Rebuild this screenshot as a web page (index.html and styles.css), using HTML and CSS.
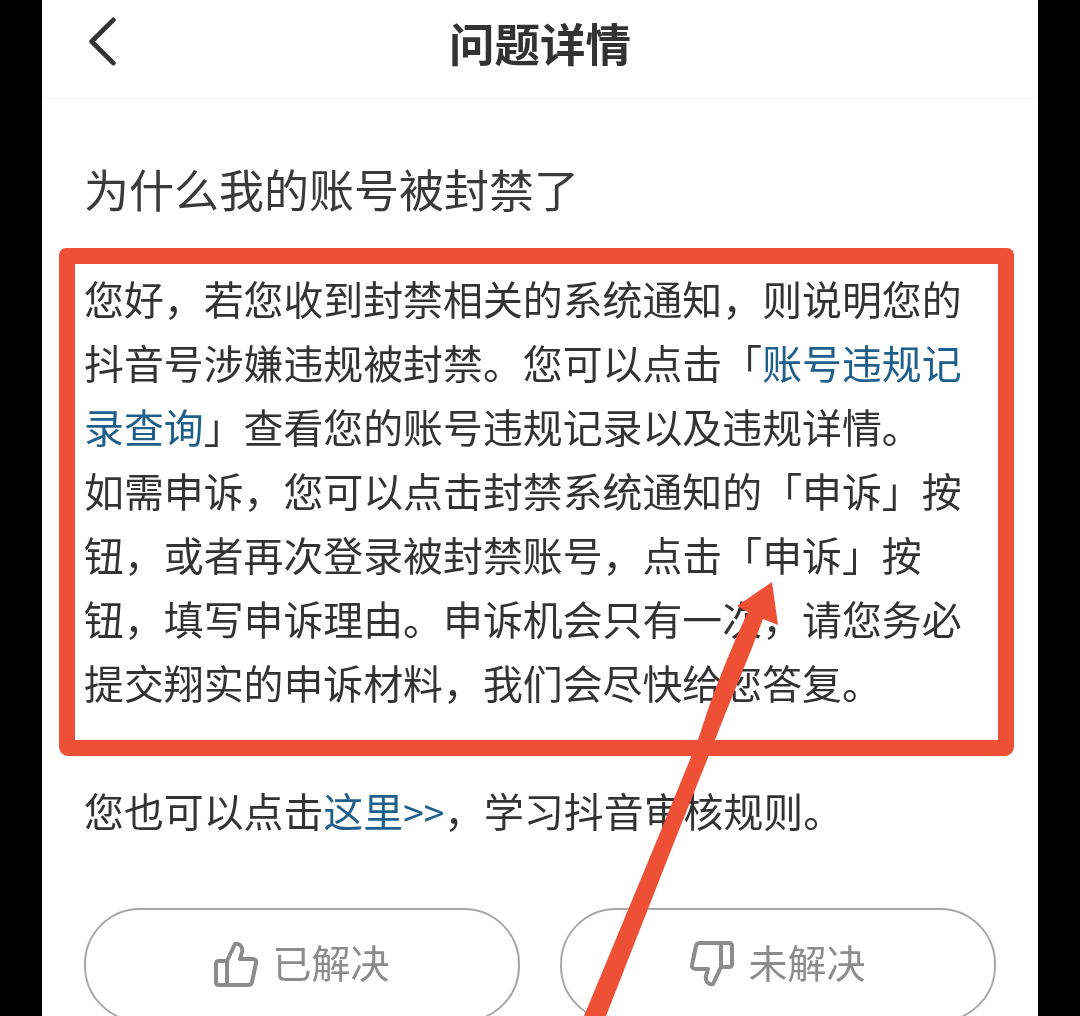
FILE: index.html
```html
<!DOCTYPE html>
<html lang="zh-CN">
<head>
<meta charset="utf-8">
<title>问题详情</title>
<link rel="stylesheet" href="styles.css">
</head>
<body>
<main class="phone">
  <header class="topbar">
    <svg class="back" viewBox="0 0 36 52" aria-hidden="true"><path d="M29 3 L6 26 L29 49"/></svg>
    <h1 class="topbar-title">问题详情</h1>
  </header>
  <section class="content">
    <h2 class="question">为什么我的账号被封禁了</h2>
    <p class="answer">您好，若您收到封禁相关的系统通知，则说明您的抖音号涉嫌违规被封禁。您可以点击「<a class="link">账号违规记录查询</a>」查看您的账号违规记录以及违规详情。<br>如需申诉，您可以点击封禁系统通知的「申诉」按钮，或者再次登录被封禁账号，点击「申诉」按钮，填写申诉理由。申诉机会只有一次，请您务必提交翔实的申诉材料，我们会尽快给您答复。</p>
    <p class="more">您也可以点击<a class="link">这里<span class="chevrons">&gt;&gt;</span></a>，学习抖音审核规则。</p>
    <div class="actions">
      <button class="vote">
        <svg class="vote-icon" viewBox="0 0 44 46" aria-hidden="true"><path d="M13 20 L21 3 C26 2 29 6 28 11 L26 18 L39 18 C41.500 18 42.500 20 42 22 L38 41 C37.500 43 36.500 44 34 44 L13 44 Z"/><path d="M13 20 L5 20 C3 20 2 21 2 23 L2 41 C2 43 3 44 5 44 L13 44"/></svg>
        <span class="vote-label">已解决</span>
      </button>
      <button class="vote">
        <svg class="vote-icon" viewBox="0 0 44 46" aria-hidden="true"><path d="M31 26 L23 43 C18 44 15 40 16 35 L18 28 L6 28 C3 28 1.500 26 2 24 L6 5 C6.500 3 7.500 2 10 2 L31 2 Z"/><path d="M31 2 L39 2 C41 2 42 3 42 5 L42 23 C42 25 41 26 39 26 L31 26"/></svg>
        <span class="vote-label">未解决</span>
      </button>
    </div>
  </section>
  <div class="highlight"></div>
  <svg class="arrow" viewBox="0 0 1080 1016" aria-hidden="true"><path d="M772 582 L778 625 L763 619 C748 660 730 700 715 740 L675 840 L606 1016 L584 1016 L657 840 L698 740 C712 695 730 650 748 612 L737 606 Z"/></svg>
</main>
</body>
</html>
```

FILE: styles.css
```css
* { box-sizing: border-box; }

html, body {
  margin: 0;
  height: 1016px;
  background: #000;
  overflow: hidden;
}

body {
  font-family: "Noto Sans CJK SC", "Noto Sans", sans-serif;
  color: #333;
}

.phone {
  position: relative;
  width: 996px;
  height: 1016px;
  margin: 0 auto;
  background: #fff;
  overflow: hidden;
}

.topbar {
  height: 99px;
  display: flex;
  align-items: center;
  justify-content: center;
  position: relative;
  border-bottom: 1px solid #f1f1f1;
}

.topbar-title {
  margin: -14px 0 0 0;
  font-size: 45.5px;
  font-weight: 700;
  line-height: 64px;
  color: #333;
  filter: blur(.4px);
}

.back {
  position: absolute;
  left: 44px;
  top: 17px;
  width: 34px;
  height: 49px;
  fill: none;
  stroke: #333;
  stroke-width: 5;
  stroke-linecap: round;
  stroke-linejoin: round;
}

.content {
  padding: 58px 0 0 42px;
  filter: blur(.4px);
}

.question {
  margin: 0 0 45px;
  font-size: 45px;
  font-weight: 400;
  line-height: 64px;
  color: #3a3a3a;
}

.answer {
  margin: 0 0 64px;
  width: 880px;
  font-size: 39.9px;
  line-height: 64px;
  color: #333;
}

.more {
  margin: 0 0 65px;
  font-size: 39.9px;
  line-height: 64px;
  color: #333;
}

.link {
  color: #1f5f8b;
}

.chevrons {
  font-size: 37px;
}

.actions {
  display: flex;
  gap: 40px;
}

.vote {
  width: 436px;
  height: 114px;
  display: flex;
  align-items: center;
  justify-content: center;
  gap: 14px;
  padding: 0 0 3px;
  background: #fff;
  border: 2px solid #a8a8a8;
  border-radius: 56px;
  font: 400 39px "Noto Sans CJK SC", sans-serif;
  color: #8c8c8c;
}

.vote-label {
  margin-top: -6px;
}

.vote-icon {
  width: 44px;
  height: 46px;
  fill: none;
  stroke: #8c8c8c;
  stroke-width: 4;
  stroke-linejoin: round;
}

.highlight {
  position: absolute;
  left: 17px;
  top: 248px;
  width: 955px;
  height: 508px;
  border: 16px solid #ee5035;
  border-radius: 7px 7px 9px 9px;
  filter: blur(.4px);
}

.arrow {
  position: absolute;
  left: -42px;
  top: 0;
  width: 1080px;
  height: 1016px;
  fill: #ee5035;
  filter: blur(.4px);
}
```
